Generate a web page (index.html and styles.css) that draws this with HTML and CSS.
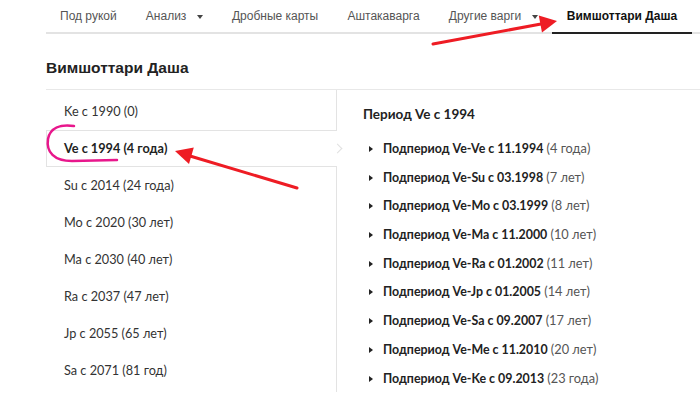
FILE: index.html
```html
<!DOCTYPE html>
<html lang="ru">
<head>
    <meta charset="UTF-8">
    <meta name="viewport" content="width=device-width, initial-scale=1.0">
    <title>Вимшоттари Даша</title>
    <link rel="stylesheet" href="styles.css">
</head>
<body>

    <div class="page">
        <!-- Меню -->
        <ul class="tabs">
            <li>Под рукой</li>
            <li>Анализ <span class="caret"></span></li>
            <li>Дробные карты</li>
            <li>Аштакаварга</li>
            <li>Другие варги <span class="caret"></span></li>
            <li class="active">Вимшоттари Даша</li>
        </ul>

        <h2>Вимшоттари Даша</h2>

        <div class="dasha">
            <!-- Периоды -->
            <ul class="periods">
                <li>Ke c 1990 (0)</li>
                <li class="active">Ve c 1994 (4 года)</li>
                <li>Su c 2014 (24 года)</li>
                <li>Mo c 2020 (30 лет)</li>
                <li>Ma c 2030 (40 лет)</li>
                <li>Ra c 2037 (47 лет)</li>
                <li>Jp c 2055 (65 лет)</li>
                <li>Sa c 2071 (81 год)</li>
            </ul>

            <!-- Подпериоды -->
            <div class="details">
                <h3>Период Ve c 1994</h3>
                <ul class="subperiods">
                    <li><b>Подпериод Ve-Ve c 11.1994</b> <span>(4 года)</span></li>
                    <li><b>Подпериод Ve-Su c 03.1998</b> <span>(7 лет)</span></li>
                    <li><b>Подпериод Ve-Mo c 03.1999</b> <span>(8 лет)</span></li>
                    <li><b>Подпериод Ve-Ma c 11.2000</b> <span>(10 лет)</span></li>
                    <li><b>Подпериод Ve-Ra c 01.2002</b> <span>(11 лет)</span></li>
                    <li><b>Подпериод Ve-Jp c 01.2005</b> <span>(14 лет)</span></li>
                    <li><b>Подпериод Ve-Sa c 09.2007</b> <span>(17 лет)</span></li>
                    <li><b>Подпериод Ve-Me c 11.2010</b> <span>(20 лет)</span></li>
                    <li><b>Подпериод Ve-Ke c 09.2013</b> <span>(23 года)</span></li>
                </ul>
            </div>
        </div>
    </div>

    <!-- Пометки поверх скриншота -->
    <svg class="marks" width="700" height="400" viewBox="0 0 700 400">
        <line x1="433" y1="44" x2="541" y2="24" stroke="#ee1c24" stroke-width="3" stroke-linecap="round"/>
        <polygon points="557,21 538.8,15.5 542,32.5" fill="#ee1c24"/>
        <line x1="297" y1="188" x2="190" y2="156" stroke="#ee1c24" stroke-width="3" stroke-linecap="round"/>
        <polygon points="175,151 193.8,147.6 189,164" fill="#ee1c24"/>
        <path d="M74 126 C 60 124, 50 128, 48 139 C 46 152, 54 161, 72 161 L 117 160" fill="none" stroke="#e8178c" stroke-width="2.5" stroke-linecap="round"/>
    </svg>

</body>
</html>
```

FILE: styles.css
```css
body {
    margin: 0;
    background-color: #fff;
    font-family: 'Lato', sans-serif;
    color: #333;
}

.page {
    padding-left: 46px;
}

ul {
    list-style: none;
    margin: 0;
    padding: 0;
}

.tabs {
    display: flex;
    border-bottom: 2px solid #e3e3e3;
    font-family: 'Liberation Sans', Arial, sans-serif;
    font-size: 12px;
    color: #555;
}

.tabs li {
    padding: 8px 14.6px 7px 14.6px;
    line-height: 17px;
    margin-bottom: -2px;
    border-bottom: 2px solid transparent;
    white-space: nowrap;
}

.tabs li:first-child {
    padding-left: 14px;
}

.tabs li.active {
    color: #111;
    font-weight: bold;
    border-bottom-color: #222;
}

.caret {
    display: inline-block;
    width: 0;
    height: 0;
    margin-left: 7px;
    vertical-align: middle;
    border-left: 3.5px solid transparent;
    border-right: 3.5px solid transparent;
    border-top: 4px solid #444;
}

h2 {
    font-family: 'Liberation Sans', Arial, sans-serif;
    font-size: 15.5px;
    color: #222;
    margin: 0;
    padding: 25px 0 12px 0;
    border-bottom: 1px solid #e8e8e8;
}

.dasha {
    display: flex;
}

.periods {
    width: 290px;
    border-right: 1px solid #e3e3e3;
    padding-top: 3px;
    font-size: 12.7px;
}

.periods li {
    height: 37px;
    line-height: 35px;
    padding-left: 17px;
    border: 1px solid transparent;
    border-right: none;
    box-sizing: border-box;
    position: relative;
}

.periods li.active {
    font-weight: bold;
    color: #222;
    border-color: #e3e3e3;
    background-color: #fff;
    margin-right: -1px;
}

.periods li.active::after {
    content: '';
    position: absolute;
    right: -4px;
    top: 14px;
    width: 6px;
    height: 6px;
    border-top: 1.5px solid #e0e0e0;
    border-right: 1.5px solid #e0e0e0;
    transform: rotate(45deg);
}

.details {
    padding-left: 26px;
    padding-top: 16px;
    font-size: 12.4px;
}

h3 {
    font-size: 13.5px;
    color: #222;
    margin: 0 0 12px 0;
}

.subperiods li {
    height: 18.7px;
    padding: 5px 0 5px 6px;
    line-height: 18.7px;
    color: #555;
}

.subperiods li::before {
    content: '';
    display: inline-block;
    margin-right: 10px;
    vertical-align: 1px;
    border-top: 3.5px solid transparent;
    border-bottom: 3.5px solid transparent;
    border-left: 4px solid #222;
}

.subperiods b {
    color: #222;
}

.subperiods span {
    font-size: 12.8px;
}

.marks {
    position: absolute;
    left: 0;
    top: 0;
    pointer-events: none;
}
```
